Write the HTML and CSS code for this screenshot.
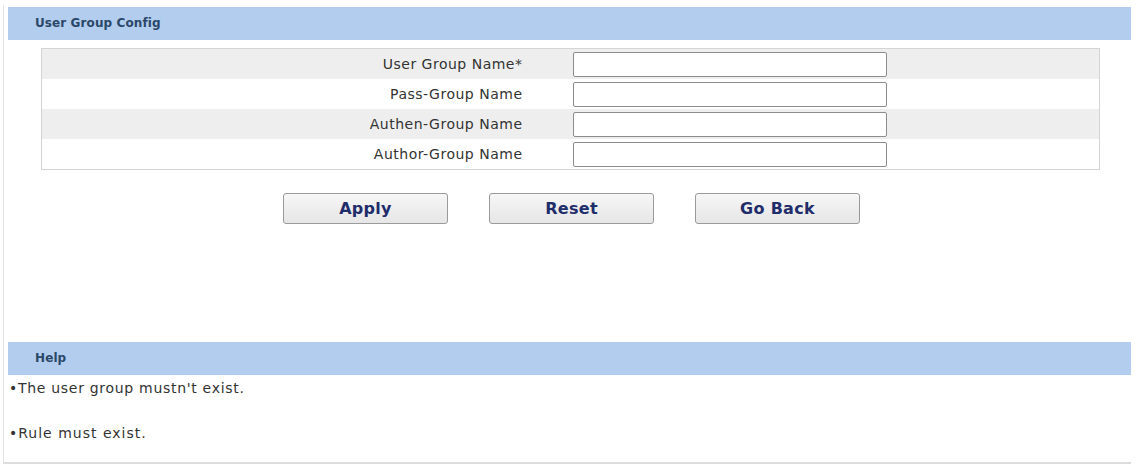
FILE: index.html
```html
<!DOCTYPE html>
<html>
<head>
<meta charset="utf-8">
<title>User Group Config</title>
<link rel="stylesheet" href="styles.css">
</head>
<body>
<div class="frame">
  <div class="band">User Group Config</div>
  <div class="form-table">
    <div class="row alt">
      <div class="label">User Group Name*</div>
      <div class="field"><input type="text" class="text-input"></div>
    </div>
    <div class="row">
      <div class="label">Pass-Group Name</div>
      <div class="field"><input type="text" class="text-input"></div>
    </div>
    <div class="row alt">
      <div class="label">Authen-Group Name</div>
      <div class="field"><input type="text" class="text-input"></div>
    </div>
    <div class="row">
      <div class="label">Author-Group Name</div>
      <div class="field"><input type="text" class="text-input"></div>
    </div>
  </div>
  <div class="actions">
    <button class="btn">Apply</button>
    <button class="btn">Reset</button>
    <button class="btn">Go Back</button>
  </div>
  <div class="band help-band">Help</div>
  <div class="help-line">&bull;The user group mustn't exist.</div>
  <div class="help-line second">&bull;Rule must exist.</div>
</div>
</body>
</html>
```
FILE: styles.css
```css
html, body {
  margin: 0;
  padding: 0;
  background: #ffffff;
  font-family: "DejaVu Sans", Verdana, sans-serif;
}

.frame {
  margin: 5px 0 0 3px;
  width: 1128px;
  height: 459px;
  box-sizing: border-box;
  border-left: 1px solid #e2e2e2;
  border-bottom: 2px solid #dcdcdc;
  padding: 2px 0 0 4px;
  display: flex;
  flex-direction: column;
}

.band {
  height: 33px;
  background: #b2cdee;
  color: #2b4869;
  font-weight: bold;
  font-size: 12px;
  letter-spacing: 0.1px;
  line-height: 33px;
  padding-left: 27px;
  flex: none;
}

.form-table {
  margin: 8px 31px 0 33px;
  border: 1px solid #d4d4d4;
  display: flex;
  flex-direction: column;
}

.row {
  display: grid;
  grid-template-columns: 1fr 1fr;
  height: 30px;
  align-items: center;
  background: #ffffff;
}

.row.alt {
  background: #eeeeee;
}

.label {
  text-align: right;
  padding-right: 48px;
  font-size: 14px;
  letter-spacing: 0.5px;
  color: #333333;
}

.field {
  padding-left: 2px;
  display: flex;
  align-items: center;
}

.text-input {
  width: 314px;
  height: 25px;
  box-sizing: border-box;
  border: 1px solid #8c8c8c;
  border-radius: 2px;
  background: #ffffff;
  margin: 0;
  padding: 0 3px;
}

.actions {
  margin-top: 23px;
  display: flex;
  justify-content: center;
  gap: 41px;
  padding-left: 4px;
}

.btn {
  width: 165px;
  height: 31px;
  box-sizing: border-box;
  border: 1px solid #9a9a9a;
  border-radius: 3px;
  background: linear-gradient(#f6f6f6, #e6e6e6);
  color: #1f2d6b;
  font-family: "DejaVu Sans", Verdana, sans-serif;
  font-weight: bold;
  font-size: 16px;
  letter-spacing: 0.3px;
  padding: 0;
  margin: 0;
}

.help-band {
  margin-top: 118px;
}

.help-line {
  font-size: 14px;
  letter-spacing: 0.7px;
  color: #333333;
  margin-top: 5px;
  margin-left: 1px;
  line-height: 16px;
}

.help-line.second {
  margin-top: 29px;
  letter-spacing: 1px;
}
```
